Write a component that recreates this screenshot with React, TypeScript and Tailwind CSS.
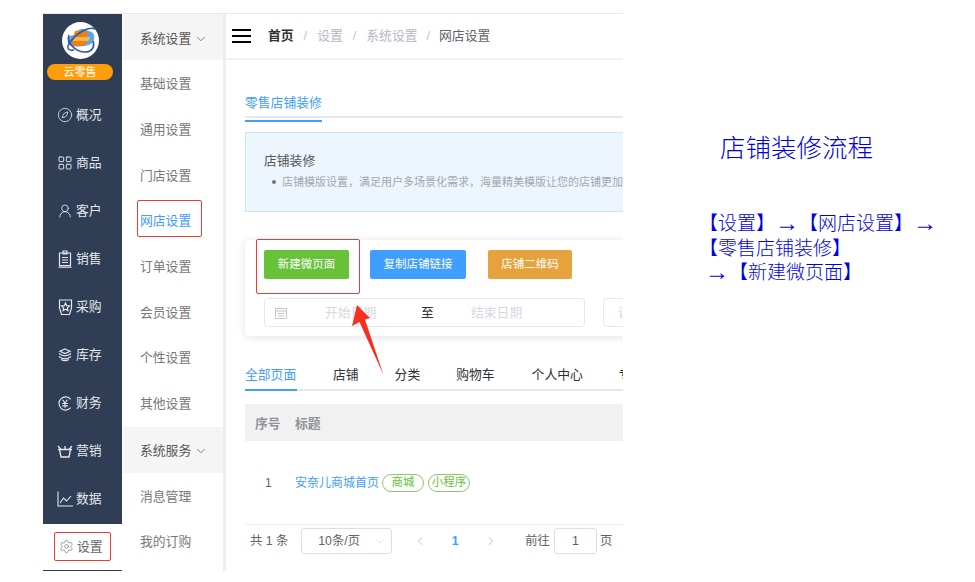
import { ChevronDown, ChevronLeft, ChevronRight, Compass, LayoutGrid, UserRound, Settings } from "lucide-react";
import type { ReactNode } from "react";

const cn = "font-['Liberation_Sans','Noto_Sans_CJK_SC',sans-serif]";

const IconSales = () => (
  <svg width="14" height="18" viewBox="0 0 14 18" fill="none" stroke="currentColor" strokeWidth="1.2">
    <path d="M1.500 3h11v12.500h-11zM5 1h4v3H5zM4 7.500h6M4 10h6M4 12.500h6M.5 17.200h13" />
  </svg>
);
const IconBuy = () => (
  <svg width="15" height="17" viewBox="0 0 15 17" fill="none" stroke="currentColor" strokeWidth="1.2">
    <path d="M1.500 1h12v8L11.500 15.500h-8L1.500 9z" />
    <path d="M7.500 4l1.200 2.700 2.800.3-2.100 1.900.6 2.800-2.500-1.400L5 11.700l.6-2.800L3.500 7l2.800-.3z" />
  </svg>
);
const IconStock = () => (
  <svg width="16" height="14" viewBox="0 0 16 14" fill="none" stroke="currentColor" strokeWidth="1.2">
    <path d="M8 1l5 2.300-5 2.300-5-2.300zM2 5.500c2 1.500 4 2.300 6 2.300s4-.8 6-2.300M2 8.500c2 1.500 4 2.300 6 2.300s4-.8 6-2.300M4 11.500c1.300.7 2.700 1.200 4 1.200s2.700-.5 4-1.200" />
  </svg>
);
const IconMoney = () => (
  <svg width="17" height="17" viewBox="0 0 17 17" fill="none" stroke="currentColor" strokeWidth="1.2">
    <path d="M14.500 4a7 7 0 1 0 0 9" />
    <path d="M6 4.500l2.500 3.500L11 4.500M5.500 8.500h6M5.500 11h6M8.500 8v5" />
  </svg>
);
const IconShop = () => (
  <svg width="16" height="13" viewBox="0 0 16 13" fill="none" stroke="currentColor" strokeWidth="1.3">
    <path d="M1 4.500h14M2.500 4.500l1.500 7.500h8l1.500-7.500M1 1l3 3.500M15 1l-3 3.500M8 1v3.500" />
  </svg>
);
const IconData = () => (
  <svg width="16" height="16" viewBox="0 0 16 16" fill="none" stroke="currentColor" strokeWidth="1.1">
    <path d="M1 .5v14.500h15M3 12l3.500-5 3 3L14 5" />
  </svg>
);

const mainNav: { label: string; icon: ReactNode }[] = [
  { label: "概况", icon: <Compass size={16} strokeWidth={1.2} /> },
  { label: "商品", icon: <LayoutGrid size={16} strokeWidth={1.4} /> },
  { label: "客户", icon: <UserRound size={16} strokeWidth={1.3} /> },
  { label: "销售", icon: <IconSales /> },
  { label: "采购", icon: <IconBuy /> },
  { label: "库存", icon: <IconStock /> },
  { label: "财务", icon: <IconMoney /> },
  { label: "营销", icon: <IconShop /> },
  { label: "数据", icon: <IconData /> },
];

const Logo = () => (
  <svg width="37" height="37" viewBox="0 0 37 37">
    <circle cx="18.500" cy="18.500" r="18.500" fill="#fff" />
    <path d="M6 21c-1-5 2-8 6-8 2-6 10-8 14-4 5 0 7 4 6 8-1 5-6 7-12 7-6 1-12 1-14-3z" fill="#58a6e8" />
    <path d="M13 9h12l1 0-3 15H9z" fill="#ee7f12" />
    <path d="M12 15h16l-1.500 4H11z" fill="#f8b93c" />
    <path d="M33 7c-5-3-17 3-24 12-5 6-4 10 3 9" fill="none" stroke="#2d55a8" strokeWidth="1.500" />
    <path d="M7 13c-3 8 7 17 16 17 7 0 10-5 8-11" fill="none" stroke="#2d55a8" strokeWidth="1.700" />
  </svg>
);

const subA = ["基础设置", "通用设置", "门店设置", "网店设置", "订单设置", "会员设置", "个性设置", "其他设置"];
const subB = ["消息管理", "我的订购"];
const pageTabs = ["店铺", "分类", "购物车"];

const SubHead = ({ label }: { label: string }) => (
  <div className="h-[46px] flex items-center pl-[17px] pt-[3px] bg-[#f5f5f5] text-[#555] text-[12.800px]">
    {label}
    <ChevronDown size={14} strokeWidth={1.200} className="ml-[3px]" />
  </div>
);

const SubItem = ({ label }: { label: string }) => {
  const active = label === "网店设置";
  return (
    <div className="h-[45.700px] flex items-center pl-[17px] text-[12.800px] text-[#777]">
      {active ? (
        <span className="relative text-[#409eff]">
          {label}
          <span className="absolute -left-[3px] -top-[11px] w-[65px] h-[37px] border border-[#ee3a34] rounded-[2px]" />
        </span>
      ) : (
        label
      )}
    </div>
  );
};

const Arrow = () => <span className="text-[24px] leading-[20px] align-[-1px]">→</span>;

export default function App() {
  return (
    <div className={`${cn} w-[975px] h-[582px] bg-white overflow-hidden flex pt-[13px] pl-[43px]`}>
      <div className="w-[580px] h-[558px] flex shrink-0 overflow-hidden border-t border-[#e8e8e8]">
        {/* dark rail */}
        <aside className="w-[79px] shrink-0 flex flex-col">
          <div className="h-[510px] bg-[#2f3e54] flex flex-col">
            <div className="h-[77px] flex flex-col items-center pt-[8px] pr-[5px]">
              <Logo />
              <div className="mt-[5px] w-[66px] h-[16px] rounded-full bg-[#ff9e0d] text-white text-[11px] leading-[16px] text-center">云零售</div>
            </div>
            {mainNav.map((n) => (
              <div key={n.label} className="h-[48px] flex items-center pl-[14px] text-[#e4e8ee] text-[12.800px]">
                <span className="w-[16px] flex justify-center mr-[3px]">{n.icon}</span>
                {n.label}
              </div>
            ))}
          </div>
          <div className="flex-1 flex items-start pl-[11px] pt-[8px] border-b border-[#2f3e54]">
            <div className="w-[57px] h-[29px] flex items-center pl-[4px] gap-[3px] border border-[#ee3a34] rounded-[2px] text-[#666] text-[12.800px]">
              <Settings size={15} strokeWidth={1} />
              设置
            </div>
          </div>
        </aside>

        {/* secondary menu */}
        <nav className="w-[100px] ml-[1px] shrink-0 border-r-[3px] border-[#eeeeee] box-content">
          <SubHead label="系统设置" />
          <div className="pt-[1px]">
            {subA.map((s) => (
              <SubItem key={s} label={s} />
            ))}
          </div>
          <SubHead label="系统服务" />
          <div className="pt-[1px]">
            {subB.map((s) => (
              <SubItem key={s} label={s} />
            ))}
          </div>
        </nav>

        {/* content */}
        <main className="w-[398px] shrink-0 overflow-hidden">
          <header className="h-[46px] flex items-center pl-[6px] border-b-2 border-[#f0f0f0] text-[12.800px]">
            <div className="flex flex-col gap-[4px] w-[19px] mr-[17px]">
              <span className="h-[2px] bg-black" />
              <span className="h-[2px] bg-black" />
              <span className="h-[2px] bg-black" />
            </div>
            <b className="text-[#303133] font-bold">首页</b>
            <span className="mx-[10px] text-[#c0c4cc]">/</span>
            <span className="text-[#b4b8bf]">设置</span>
            <span className="mx-[10px] text-[#c0c4cc]">/</span>
            <span className="text-[#b4b8bf]">系统设置</span>
            <span className="mx-[9px] text-[#c0c4cc]">/</span>
            <span className="text-[#606266]">网店设置</span>
          </header>

          <div className="w-[420px] pl-[20px] -ml-[1px]">
            <div className="mt-[30px] h-[28px] border-b-2 border-[#e4e7ed] w-[400px]">
              <span className="inline-block h-[28px] w-[77px] text-[12.800px] text-[#409eff] border-b-2 border-[#409eff] whitespace-nowrap leading-[18px]">零售店铺装修</span>
            </div>

            <div className="mt-[14px] h-[80px] border border-[#c5e8f7] bg-[#eef6fd] pl-[18px] pt-[19px] whitespace-nowrap">
              <div className="text-[12.800px] leading-[17px] text-[#555]">店铺装修</div>
              <div className="mt-[6px] flex items-center text-[#a3a6ad] text-[11px] leading-[14px]">
                <span className="w-[4px] h-[4px] rounded-full bg-[#777] ml-[8px] mr-[6px]" />
                店铺模版设置，满足用户多场景化需求，海量精美模版让您的店铺更加
              </div>
            </div>

            <div className="relative mt-[28px] h-[96px] rounded-[4px] shadow-[0_1px_8px_rgba(0,0,0,0.12)] pl-[19px] pt-[10px]">
              <div className="flex text-white text-[11.500px]">
                <div className="relative">
                  <span className="w-[85px] h-[29px] flex items-center justify-center bg-[#67c23a] rounded-[2px]">新建微页面</span>
                  <div className="absolute -left-[8px] -top-[11px] w-[104px] h-[55px] border border-[#ee3a34] rounded-[2px]" />
                </div>
                <span className="ml-[21px] w-[96px] h-[29px] flex items-center justify-center bg-[#409eff] rounded-[2px]">复制店铺链接</span>
                <span className="ml-[22px] w-[84px] h-[29px] flex items-center justify-center bg-[#e6a23c] rounded-[2px]">店铺二维码</span>
              </div>
              <div className="mt-[19px] flex">
                <div className="w-[321px] h-[29px] shrink-0 flex items-center border border-[#e4e7ed] rounded-[4px] text-[12.800px] text-[#d5d8dd]">
                  <svg className="ml-[10px]" width="12" height="12" viewBox="0 0 12 12" fill="none" stroke="#c0c4cc">
                    <path d="M.5 1.500h11v10H.5zM.5 4h11M3 6.500h6M3 9h6" />
                  </svg>
                  <span className="ml-[38px] w-[72px]">开始日期</span>
                  <span className="ml-[24px] w-[50px] text-[#303133]">至</span>
                  <span>结束日期</span>
                </div>
                <div className="ml-[18px] w-[60px] h-[29px] shrink-0 flex items-center pl-[14px] border border-[#e4e7ed] rounded-[4px] text-[12.800px] text-[#d5d8dd] whitespace-nowrap">请输入</div>
              </div>
              <svg className="absolute left-[105px] top-[63px]" width="36" height="76" viewBox="0 0 36 76">
                <path d="M7 2L20 15l-5 1.500L33.500 72 9.500 19 2 23z" fill="#f5301f" />
              </svg>
            </div>

            <div className="mt-[30px] h-[25px] w-[400px] flex border-b-2 border-[#e4e7ed] text-[12.800px] leading-[17px] text-[#303133] whitespace-nowrap">
              <span className="h-[25px] w-[52px] border-b-2 border-[#409eff] text-[#409eff]">全部页面</span>
              {pageTabs.map((t) => (
                <span key={t} className="ml-[36px]">{t}</span>
              ))}
              <span className="ml-[37px]">个人中心</span>
              <span className="ml-[36px]">专题</span>
            </div>

            <div className="mt-[13px] h-[37px] w-[400px] flex items-center pt-[2px] bg-[#f1f1f1] text-[12.800px] font-bold text-[#909399]">
              <span className="w-[50px] pl-[10px]">序号</span>
              <span>标题</span>
            </div>
            <div className="h-[84px] w-[400px] flex items-center border-b border-[#ebeef5] text-[12px]">
              <span className="w-[50px] pl-[20px] text-[#606266]">1</span>
              <span className="text-[#409eff]">安奈儿商城首页</span>
              <span className="ml-[3px] w-[42px] h-[18px] flex items-center justify-center rounded-full border border-[#85ce61] text-[#67c23a] text-[11.500px]">商城</span>
              <span className="ml-[4px] w-[42px] h-[18px] flex items-center justify-center rounded-full border border-[#85ce61] text-[#67c23a] text-[11.500px]">小程序</span>
            </div>
            <div className="mt-[3px] h-[26px] flex items-center pl-[5px] text-[12.300px] text-[#606266] whitespace-nowrap">
              <span>共 1 条</span>
              <span className="ml-[13px] w-[91px] h-[26px] flex items-center justify-between pl-[16px] pr-[5px] border border-[#dcdfe6] rounded-[3px]">
                10条/页
                <ChevronDown size={13} strokeWidth={1} className="text-[#c0c4cc]" />
              </span>
              <ChevronLeft size={14} strokeWidth={1.500} className="ml-[21px] text-[#b4b8bf]" />
              <span className="ml-[24px] w-[8px] text-center font-bold text-[#409eff]">1</span>
              <ChevronRight size={14} strokeWidth={1.500} className="ml-[25px] text-[#b4b8bf]" />
              <span className="ml-[27px]">前往</span>
              <span className="ml-[4px] w-[43px] h-[26px] flex items-center justify-center border border-[#dcdfe6] rounded-[3px]">1</span>
              <span className="ml-[3px]">页</span>
            </div>
          </div>
        </main>
      </div>

      {/* annotation */}
      <div className="ml-[76px] shrink-0 w-[255px] text-[#0000e6] font-light">
        <div className="mt-[118px] ml-[21px] text-[25.500px] leading-[34px] whitespace-nowrap">店铺装修流程</div>
        <div className="mt-[47px] text-[19px] leading-[24.500px] whitespace-nowrap">
          <div>【设置】<Arrow />【网店设置】<Arrow /></div>
          <div>【零售店铺装修】</div>
          <div className="ml-[6px]"><Arrow />【新建微页面】</div>
        </div>
      </div>
    </div>
  );
}
